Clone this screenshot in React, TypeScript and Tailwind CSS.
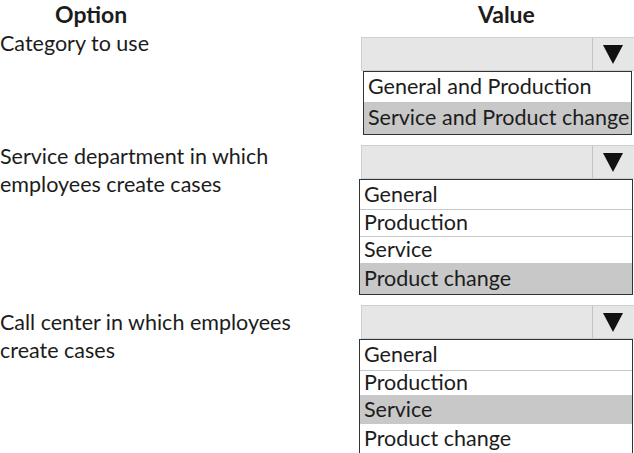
type Item = { label: string; h: string; on?: boolean };

const lists: { label: string[]; labelTop: string; listLeft: string; rows: Item[] }[] = [
  {
    label: ["Category to use"],
    labelTop: "-mt-[8px]",
    listLeft: "ml-[4px] w-[269px]",
    rows: [
      { label: "General and Production", h: "h-[30px]" },
      { label: "Service and Product change", h: "h-[32px]", on: true },
    ],
  },
  {
    label: ["Service department in which", "employees create cases"],
    labelTop: "-mt-[3px]",
    listLeft: "w-[274px]",
    rows: [
      { label: "General", h: "h-[29px]" },
      { label: "Production", h: "h-[27px]" },
      { label: "Service", h: "h-[27px]" },
      { label: "Product change", h: "h-[31px]", on: true },
    ],
  },
  {
    label: ["Call center in which employees", "create cases"],
    labelTop: "mt-[3px]",
    listLeft: "w-[274px]",
    rows: [
      { label: "General", h: "h-[30px]" },
      { label: "Production", h: "h-[25px]" },
      { label: "Service", h: "h-[29px]", on: true },
      { label: "Product change", h: "h-[30px]" },
    ],
  },
];

function Select({ rows, listLeft }: { rows: Item[]; listLeft: string }) {
  return (
    <div className="flex shrink-0 flex-col">
      <div className="ml-[2px] flex h-[34px] w-[276px] border border-[#cfcfcf] bg-[#e6e6e6]">
        <div className="w-[231px] border-r border-[#c4c4c4]" />
        <div className="flex flex-1 justify-start pl-[10px] pt-[7px]">
          <svg width="20" height="19" viewBox="0 0 20 19">
            <polygon points="0,0 20,0 10,19" fill="#111" />
          </svg>
        </div>
      </div>
      <div className={`${listLeft} border border-[#333]`}>
        {rows.map((r, i) => (
          <div
            key={r.label}
            className={`${r.h} flex items-center pl-[4px] text-[21.5px] leading-none whitespace-nowrap ${
              r.on ? "bg-[#c8c8c8]" : "bg-white"
            } ${i > 0 && !r.on && !rows[i - 1].on ? "border-t border-[#c8c8c8]" : ""}`}
          >
            {r.label}
          </div>
        ))}
      </div>
    </div>
  );
}

export default function App() {
  return (
    <div className="h-[453px] w-[634px] overflow-hidden bg-white text-[#1c1c1c] [font-family:Lato,'Open_Sans',sans-serif]">
      <div className="flex h-[37px] text-[23px] leading-[28px] font-bold">
        <div className="w-[359px] shrink-0 pl-[55px]">Option</div>
        <div className="shrink-0 pl-[119px]">Value</div>
      </div>
      <div className="flex flex-col gap-[10px]">
        {lists.map((s) => (
          <div key={s.label[0]} className="flex">
            <div className={`w-[359px] shrink-0 ${s.labelTop} text-[21.5px] leading-[28px]`}>
              {s.label.map((l) => (
                <div key={l}>{l}</div>
              ))}
            </div>
            <Select rows={s.rows} listLeft={s.listLeft} />
          </div>
        ))}
      </div>
    </div>
  );
}
